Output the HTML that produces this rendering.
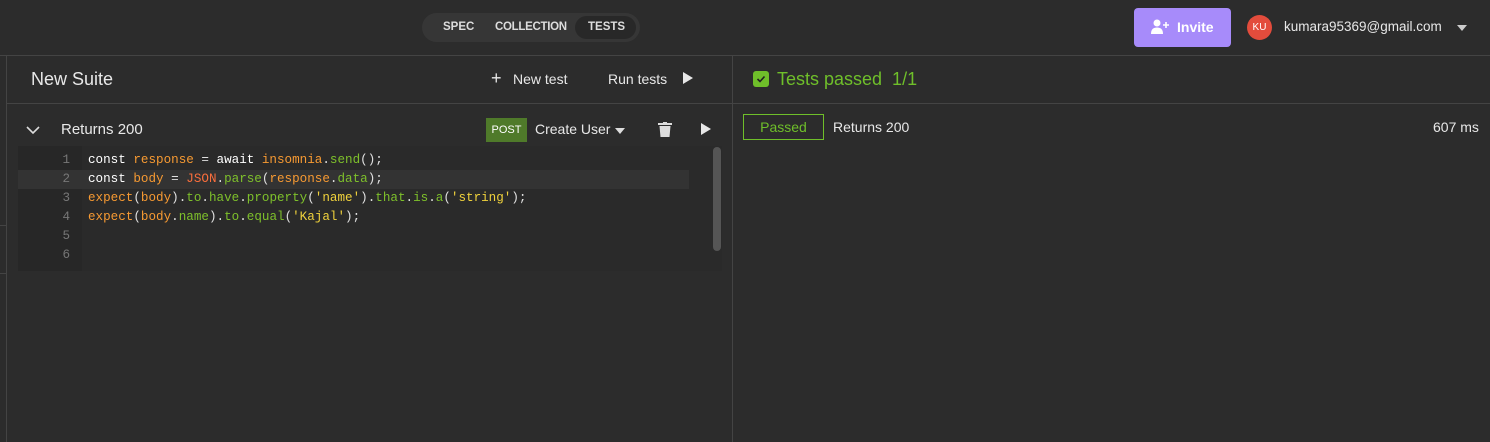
<!DOCTYPE html>
<html><head><style>
*{margin:0;padding:0;box-sizing:border-box}
body{width:1490px;height:442px;background:#2c2c2c;font-family:"Liberation Sans",sans-serif;color:#e0e0e0;position:relative;overflow:hidden}
.a{position:absolute}
.code{font-family:"Liberation Mono",monospace;font-size:12.6px;line-height:19px;white-space:pre}
.k{color:#fff}.v{color:#f79a32}.f{color:#7ec02b}.s{color:#f0d23c}.p{color:#e0e0e0}.o{color:#fa6e3c}
</style></head><body>
<div class="a" style="left:0;top:55px;width:1490px;height:1px;background:#444"></div>
<div class="a" style="left:6px;top:56px;width:1px;height:386px;background:#444"></div>
<div class="a" style="left:0;top:225px;width:6px;height:1px;background:#444"></div>
<div class="a" style="left:0;top:273px;width:6px;height:1px;background:#444"></div>
<div class="a" style="left:732px;top:56px;width:1px;height:386px;background:#444"></div>
<div class="a" style="left:7px;top:103px;width:1483px;height:1px;background:#444"></div>
<!-- tabs -->
<div class="a" style="left:422px;top:13px;width:218px;height:29px;border-radius:15px;background:#363636"></div>
<div class="a" style="left:575px;top:16px;width:61px;height:23px;border-radius:12px;background:#282828"></div>
<div class="a" style="left:443px;top:21px;font-size:11.5px;font-weight:bold;color:#ddd">SPEC</div>
<div class="a" style="left:495px;top:21px;font-size:11.5px;font-weight:bold;color:#ddd;letter-spacing:-0.3px">COLLECTION</div>
<div class="a" style="left:588px;top:21px;font-size:11.5px;font-weight:bold;color:#ddd">TESTS</div>
<!-- invite -->
<div class="a" style="left:1134px;top:8px;width:97px;height:39px;border-radius:4px;background:#a78bfa"></div>
<svg class="a" style="left:1151px;top:19px" width="20" height="16" viewBox="0 0 20 16"><circle cx="6" cy="4" r="3.5" fill="#fff"/><path d="M0 15c0-5 2.5-6.5 6-6.5s6 1.5 6 6.5z" fill="#fff"/><path d="M15 3v6M12 6h6" stroke="#fff" stroke-width="1.6"/></svg>
<div class="a" style="left:1177px;top:19px;font-size:14px;font-weight:bold;color:#fff">Invite</div>
<div class="a" style="left:1247px;top:15px;width:25px;height:25px;border-radius:50%;background:#e34c3c;font-size:10px;color:#fff;text-align:center;line-height:25px">KU</div>
<div class="a" style="left:1284px;top:19px;font-size:13.5px;color:#e8e8e8">kumara95369@gmail.com</div>
<div class="a" style="left:1457px;top:25px;width:0;height:0;border:5px solid transparent;border-top:6px solid #ccc;border-bottom:0"></div>
<!-- left header -->
<div class="a" style="left:31px;top:69px;font-size:18px;color:#e8e8e8">New Suite</div>
<div class="a" style="left:491px;top:68px;font-size:18px;color:#e8e8e8">+</div>
<div class="a" style="left:513px;top:71px;font-size:14px;color:#e8e8e8">New test</div>
<div class="a" style="left:608px;top:71px;font-size:14px;color:#e8e8e8">Run tests</div>
<div class="a" style="left:683px;top:72px;width:0;height:0;border-top:6px solid transparent;border-bottom:6px solid transparent;border-left:10px solid #e8e8e8"></div>
<!-- test row -->
<svg class="a" style="left:26px;top:126px" width="14" height="9"><path d="M1 1l6 6 6-6" stroke="#ddd" stroke-width="1.6" fill="none"/></svg>
<div class="a" style="left:61px;top:121px;font-size:15px;color:#e8e8e8">Returns 200</div>
<div class="a" style="left:486px;top:118px;width:41px;height:24px;background:#4f7a2a;font-size:11px;color:#fff;text-align:center;line-height:24px">POST</div>
<div class="a" style="left:535px;top:121px;font-size:14px;color:#e8e8e8">Create User</div>
<div class="a" style="left:615px;top:128px;width:0;height:0;border:5px solid transparent;border-top:6px solid #ddd;border-bottom:0"></div>
<svg class="a" style="left:658px;top:122px" width="14" height="15"><rect x="0" y="1" width="14" height="2" fill="#ddd"/><rect x="5" y="0" width="4" height="2" fill="#ddd"/><path d="M1.5 4h11l-1 11h-9z" fill="#ddd"/></svg>
<div class="a" style="left:701px;top:123px;width:0;height:0;border-top:6px solid transparent;border-bottom:6px solid transparent;border-left:10px solid #e8e8e8"></div>
<!-- editor -->
<div class="a" style="left:18px;top:146px;width:704px;height:125px;background:#2a2a2a"></div>
<div class="a" style="left:18px;top:146px;width:64px;height:125px;background:#272727"></div>
<div class="a" style="left:18px;top:170px;width:671px;height:19px;background:#333"></div>
<div class="a" style="left:713px;top:147px;width:8px;height:104px;border-radius:4px;background:#555"></div>
<div class="a code" style="left:50px;top:151px;color:#777;text-align:right;width:20px">1
2
3
4
5
6</div>
<div class="a code" style="left:88px;top:151px"><span class="k">const</span> <span class="v">response</span> <span class="p">=</span> <span class="k">await</span> <span class="v">insomnia</span><span class="p">.</span><span class="f">send</span><span class="p">();</span>
<span class="k">const</span> <span class="v">body</span> <span class="p">=</span> <span class="o">JSON</span><span class="p">.</span><span class="f">parse</span><span class="p">(</span><span class="v">response</span><span class="p">.</span><span class="f">data</span><span class="p">);</span>
<span class="v">expect</span><span class="p">(</span><span class="v">body</span><span class="p">).</span><span class="f">to</span><span class="p">.</span><span class="f">have</span><span class="p">.</span><span class="f">property</span><span class="p">(</span><span class="s">'name'</span><span class="p">).</span><span class="f">that</span><span class="p">.</span><span class="f">is</span><span class="p">.</span><span class="f">a</span><span class="p">(</span><span class="s">'string'</span><span class="p">);</span>
<span class="v">expect</span><span class="p">(</span><span class="v">body</span><span class="p">.</span><span class="f">name</span><span class="p">).</span><span class="f">to</span><span class="p">.</span><span class="f">equal</span><span class="p">(</span><span class="s">'Kajal'</span><span class="p">);</span></div>
<!-- right -->
<div class="a" style="left:753px;top:71px;width:16px;height:16px;border-radius:3px;background:#6fbf2a"></div>
<svg class="a" style="left:756px;top:74px" width="10" height="10"><path d="M1.5 5l2.5 2.5 4.5-5" stroke="#222" stroke-width="1.6" fill="none"/></svg>
<div class="a" style="left:777px;top:69px;font-size:18px;color:#6fbf2a">Tests passed&nbsp; 1/1</div>
<div class="a" style="left:743px;top:114px;width:81px;height:26px;border:1px solid #6fbf2a;font-size:14px;color:#6fbf2a;text-align:center;line-height:24px">Passed</div>
<div class="a" style="left:833px;top:119px;font-size:14px;color:#e8e8e8">Returns 200</div>
<div class="a" style="left:1433px;top:119px;font-size:14px;color:#e8e8e8">607 ms</div>
</body></html>
